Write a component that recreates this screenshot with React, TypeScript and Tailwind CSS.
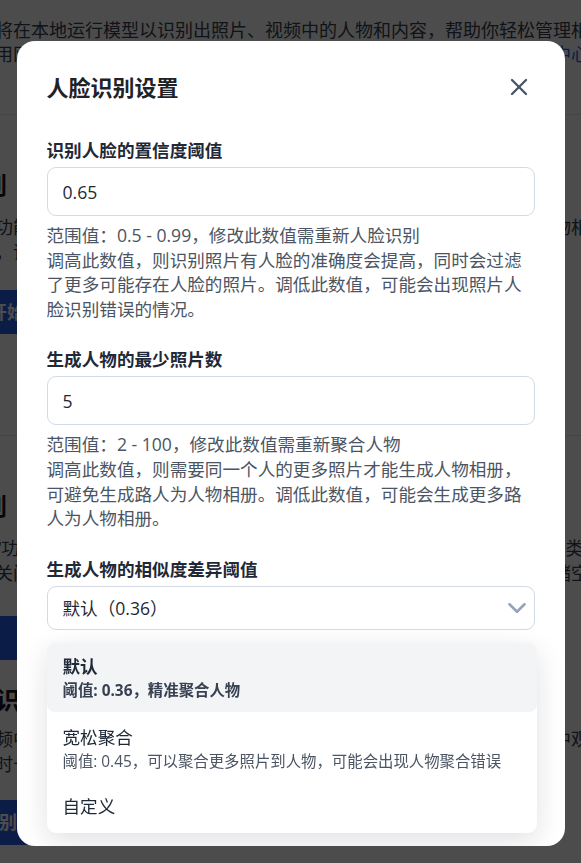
import { ChevronDown, X } from "lucide-react";

const fontStack = "font-['Open_Sans','Noto_Sans_CJK_SC',sans-serif]";

function BackgroundPage() {
  return (
    <div className="h-[863px] overflow-hidden bg-white text-[18px] text-[#374151]">
      <div className="-ml-[41px] w-[700px]">
        <div className="border-b border-gray-200 pt-[18px] pb-[48px] leading-[24px] whitespace-nowrap">
          <p>功能将在本地运行模型以识别出照片、视频中的人物和内容，帮助你轻松管理相册。</p>
          <p>
            不占用网络流量，全部处理均在设备上完成，可随时暂停恢复进度，详
            <span className="text-[#2563eb]">帮助中心</span>
          </p>
        </div>

        <section className="border-b border-gray-200 pt-[54px] pb-[101px]">
          <h2 className="-ml-[48px] text-[24px] leading-[32px] font-bold text-[#111827]">人脸识别</h2>
          <div className="mt-[14px] leading-[25px] whitespace-nowrap">
            <p>开启功能后，系统将自动扫描图库中的所有照片与视频，并根据识别出的人物相册归类整理</p>
            <p>照片，识别过程可能会占用较多的设备性能与电量，请耐心等待扫描完成。</p>
          </div>
          <button className="mt-[25px] h-[44px] rounded-[8px] bg-[#2563eb] px-[30px] font-bold text-white">
            开始识别
          </button>
        </section>

        <section className="pt-[54px]">
          <h2 className="-ml-[48px] text-[24px] leading-[32px] font-bold text-[#111827]">内容识别</h2>
          <div className="mt-[14px] leading-[25px] whitespace-nowrap">
            <p>需在“功能设置”中开启后，才会自动对照片中的场景、物体与文字进行智能分类归档</p>
            <p>如需关闭，可在设置中随时操作，已生成的分类结果会被保留并继续占用存储空间。</p>
          </div>
          <button className="mt-[30px] h-[44px] rounded-[8px] bg-[#2563eb] px-[64px] font-bold text-white">
            开始识别
          </button>

          <h2 className="mt-[24px] -ml-[11px] text-[24px] leading-[32px] font-bold text-[#111827]">场景识别</h2>
          <div className="mt-[11px] leading-[25px] whitespace-nowrap">
            <p>对视频中的画面进行逐帧分析，自动识别其中的人物与物体，并可在时间轴中观看画面</p>
            <p>处理时长与视频数量相关，较长的视频可能需要更多时间。</p>
          </div>
          <button className="mt-[23px] h-[45px] rounded-[8px] bg-[#2563eb] px-[22px] font-bold text-white">
            识别
          </button>
        </section>
      </div>
    </div>
  );
}

function Field({
  label,
  value,
  hint,
  children,
}: {
  label: string;
  value: string;
  hint: string;
  children: React.ReactNode;
}) {
  return (
    <div className="mb-[26px]">
      <label className="block text-[17.6px] leading-[25px] font-bold text-[#1f2937]">{label}</label>
      <input
        readOnly
        value={value}
        className="mt-[4px] block h-[49px] w-full rounded-[9px] border border-[#d3dae3] px-[15px] text-[17.6px] text-[#1f2937] outline-none"
      />
      <p className="mt-[7px] text-[17.6px] leading-[24.6px] text-[#4b5563]">
        {hint}
        <br />
        {children}
      </p>
    </div>
  );
}

const options = [
  { name: "默认", desc: "阈值: 0.36，精准聚合人物", active: true },
  { name: "宽松聚合", desc: "阈值: 0.45，可以聚合更多照片到人物，可能会出现人物聚合错误", active: false },
  { name: "自定义", desc: "", active: false },
];

function FaceSettingsDialog() {
  return (
    <div className="fixed inset-0 flex items-start justify-center bg-black/70 pt-[41px]">
      <div className="relative h-[805px] w-[548px] overflow-hidden rounded-[18px] bg-white px-[30px] pt-[31px]">
        <div className="flex h-[30px] items-center justify-between">
          <h1 className="text-[22px] leading-[30px] font-bold text-[#1f2328]">人脸识别设置</h1>
          <button className="mr-[2px] text-[#475569]">
            <X size={28} strokeWidth={2} />
          </button>
        </div>

        <div className="mt-[36px]">
          <Field label="识别人脸的置信度阈值" value="0.65" hint="范围值：0.5 - 0.99，修改此数值需重新人脸识别">
            调高此数值，则识别照片有人脸的准确度会提高，同时会过滤了更多可能存在人脸的照片。调低此数值，可能会出现照片人脸识别错误的情况。
          </Field>

          <Field label="生成人物的最少照片数" value="5" hint="范围值：2 - 100，修改此数值需重新聚合人物">
            调高此数值，则需要同一个人的更多照片才能生成人物相册，可避免生成路人为人物相册。调低此数值，可能会生成更多路人为人物相册。
          </Field>

          <div>
            <label className="block text-[17.6px] leading-[25px] font-bold text-[#1f2937]">
              生成人物的相似度差异阈值
            </label>
            <div className="relative mt-[4px]">
              <button className="flex h-[44px] w-full items-center justify-between rounded-[9px] border border-[#d3dae3] pr-[2px] pl-[15px] text-[17.6px] text-[#1f2937]">
                <span>默认（0.36）</span>
                <ChevronDown size={30} strokeWidth={2} className="text-[#94a3b8]" />
              </button>

              <ul className="absolute top-full -right-[2px] left-0 mt-[13px] rounded-[9px] bg-white pb-[4px] shadow-[0_8px_28px_rgba(15,23,42,0.13)]">
                {options.map((o, i) => (
                  <li
                    key={o.name}
                    className={
                      o.active
                        ? "rounded-[8px] bg-[#f3f4f6] px-[16px] pt-[10px] pb-[9px]"
                        : i === 1
                          ? "mt-[2px] px-[16px] pt-[10px] pb-[9px]"
                          : "px-[16px] py-[10px]"
                    }
                  >
                    <div
                      className={
                        o.active
                          ? "text-[17.6px] leading-[26px] font-bold text-[#1f2937]"
                          : "text-[17.6px] leading-[26px] text-[#1f2937]"
                      }
                    >
                      {o.name}
                    </div>
                    {o.desc && (
                      <div
                        className={
                          o.active
                            ? "text-[15.4px] leading-[24px] font-bold text-[#374151]"
                            : "text-[15.4px] leading-[24px] text-[#4b5563]"
                        }
                      >
                        {o.desc}
                      </div>
                    )}
                  </li>
                ))}
              </ul>
            </div>
          </div>
        </div>
      </div>
    </div>
  );
}

export default function App() {
  return (
    <div className={`relative ${fontStack}`}>
      <BackgroundPage />
      <FaceSettingsDialog />
    </div>
  );
}
